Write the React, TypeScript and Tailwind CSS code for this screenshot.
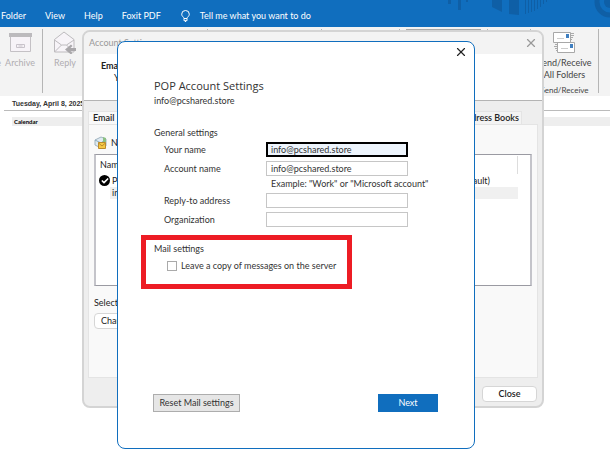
import { Check, X } from 'lucide-react'

const menu = ['Folder', 'View', 'Help', 'Foxit PDF']

const fields = [
  { id: 'your-name', label: 'Your name', value: 'info@pcshared.store', active: true },
  { id: 'account-name', label: 'Account name', value: 'info@pcshared.store', hint: 'Example: "Work" or "Microsoft account"' },
  { id: 'reply-to', label: 'Reply-to address', value: '' },
  { id: 'organization', label: 'Organization', value: '' },
]

function MenuBar() {
  return (
    <header className="relative flex h-[27px] items-center overflow-hidden bg-[#106ebe] pt-1 text-[9px] text-white">
      <svg className="absolute top-0 right-0" width="170" height="27" viewBox="0 0 170 27" fill="#0f5fa6">
        <path d="M8 0h3v4H8zM18 0h3v10h-3zM26 0h2v2h-2z" />
        <path d="M52 0h10v12l-10-5zM69 0h10v15l-10-1z" />
        <path d="M85 0h1v14h-1zM88 0h1v13h-1zM91 0h1v12h-1zM94 0h1v11h-1zM97 0h1v9h-1zM100 0h1v7h-1zM103 0h1v4h-1zM106 0h1v2h-1z" />
        <circle cx="170" cy="2" r="13" fill="none" stroke="#0f5fa6" strokeWidth="5" />
        <circle cx="170" cy="2" r="6" />
      </svg>
      <nav className="flex gap-[19px] pl-px">
        {menu.map((item) => (
          <a key={item} href="#" className="whitespace-nowrap">
            {item}
          </a>
        ))}
      </nav>
      <button className="ml-5 flex items-center gap-[10px] whitespace-nowrap">
        <svg width="9" height="12" viewBox="0 0 9 12" fill="none" stroke="white" strokeWidth="1">
          <path d="M3 8.5C3 7 .7 6.500 .7 4.200a3.800 3.700 0 0 1 7.600 0C8.300 6.500 6 7 6 8.500zM3 8.500v2.200h3V8.500M4 11.500h1" />
        </svg>
        Tell me what you want to do
      </button>
    </header>
  )
}

function ArchiveIcon() {
  return (
    <svg width="23" height="21" viewBox="0 0 23 21" fill="none">
      <path d="M1.500 4v15.500h20V4" fill="#f7f3f8" stroke="#c4c1c5" />
      <path d="M0 1h23v4H0z" fill="#bcbabd" />
      <path d="M7.500 12.500h8v3h-8zM9.500 14h4" stroke="#c9c3cb" />
    </svg>
  )
}

function ReplyIcon() {
  return (
    <svg width="24" height="23" viewBox="0 0 24 23" fill="none">
      <path d="M1.500 8.500L11 1l10 7.500v12.500H1.500z" fill="#f7f4f8" stroke="#bdbbbe" />
      <path d="M1.500 9l7 5h5l7.500-5M1.500 21l7-7M13.500 14l2 2" stroke="#bdbbbe" />
      <path d="M12 18.500l6-5 1.500 1.500-2 2H23v3h-5.500l2 2-1.500 1.500z" fill="#a9a7aa" />
    </svg>
  )
}

function SendReceiveIcon() {
  return (
    <svg width="22" height="23" viewBox="0 0 22 23" fill="none">
      <path d="M18 2.500h3M18 4.500h3M18 6.500h2M18 8.500h1M2 13.500h3M1 15.500h4M2 17.500h3M3 19.500h2" stroke="#aaa" />
      <path d="M.5 1.500h17v10H.5zM4.500 11.500h17v10h-17z" fill="#fff" stroke="#a8a8a8" />
      <path d="M4 7.500h7M8 17.500h7" stroke="#ccc" />
      <path d="M13 3h3v4h-3zM17 13h3v4h-3z" fill="#3f7fc0" />
    </svg>
  )
}

function Ribbon() {
  return (
    <div className="flex h-[69px] bg-[#f3f3f3] pt-[2px] text-[9px] text-[#b0adb1]">
      <div className="flex h-16 w-[43px] justify-end gap-1 overflow-hidden border-r border-[#b5b5b5] pr-[7px]">
        <span className="mt-7 shrink-0 leading-3">Delete</span>
        <button className="flex shrink-0 flex-col items-center pt-[3px]">
          <ArchiveIcon />
          <span className="mt-1 leading-3">Archive</span>
        </button>
      </div>
      <div className="h-16 w-[165px] border-r border-[#b5b5b5] pl-[10px]">
        <button className="flex flex-col items-center pt-[2px]">
          <ReplyIcon />
          <span className="mt-[3px] leading-3">Reply</span>
        </button>
      </div>
      <div className="h-16 flex-1 border-r border-[#b5b5b5]" />
      <div className="h-16 w-[78px] border-r border-[#b5b5b5]" />
      <div className="h-16 w-[88px] border-r border-[#b5b5b5] px-[6px]">
        <div className="h-3 border border-[#a8a8a8] bg-white" />
      </div>
      <div className="h-16 w-[43px] border-r border-[#b5b5b5]" />
      <div className="flex h-16 w-[68px] flex-col items-center border-r border-[#b5b5b5] text-[#444]">
        <button className="flex flex-col items-center pt-[2px] leading-3 whitespace-nowrap">
          <SendReceiveIcon />
          <span className="mt-[3px]">Send/Receive</span>
          <span>All Folders</span>
        </button>
        <span className="mt-[3px] text-[8px] leading-3">Send/Receive</span>
      </div>
      <div className="w-[11px]" />
    </div>
  )
}

function CalendarPane() {
  return (
    <main className="bg-white">
      <div className="ml-1 h-[15px] border-b border-[#bbb] pl-2 font-['Liberation_Sans'] text-[7px] leading-4 font-bold text-[#333]">
        Tuesday, April 8, 2025
      </div>
      <div className="mt-[6px] ml-3 h-[9px] bg-[#eee] pl-[2px] text-[6px] leading-[9px] font-bold text-black">Calendar</div>
    </main>
  )
}

function AccountSettings() {
  return (
    <section className="absolute top-[30px] right-[66px] left-[82px] rounded-lg border-2 border-[#d4d4d4] bg-[#eee] text-[9px] leading-3 text-[#222]">
      <div className="flex h-[22px] items-center justify-between rounded-t-md bg-[#f3f3f3] pr-1 pl-[5px] text-[#999]">
        Account Settings
        <button aria-label="Close account settings">
          <X size={14} strokeWidth={2} />
        </button>
      </div>
      <div className="h-[47px] border-b border-[#b4b4b4] bg-white pt-[6px] pl-[17px]">
        <h2 className="font-bold">Email Accounts</h2>
        <p className="pl-[13px]">You can</p>
      </div>
      <div className="px-1 pt-[10px]">
        <div className="flex justify-between pr-4">
          <button className="border-x border-t border-[#e4e4e4] bg-[#f9f9f9] px-1 font-semibold">Email</button>
          <button className="border-x border-t border-[#e4e4e4] bg-[#f3f3f3] px-[2px] font-semibold">Address Books</button>
        </div>
        <div className="h-[254px] border border-[#e4e4e4] bg-[#f9f9f9] px-[5px] pt-[11px]">
          <button className="flex items-center gap-1">
            <svg width="13" height="13" viewBox="0 0 13 13" fill="none">
              <path d="M1 4l6-3 5 2v7l-5 2-6-3z" fill="#dfeaf2" stroke="#9fb3bf" />
              <path d="M1 4l6 3 5-4" stroke="#86aabb" />
              <path d="M9 1l3 1v4H9z" fill="#8cc084" />
              <path d="M4.500 6.500h7v6h-7z" fill="#f6c945" stroke="#bb8b2d" />
              <path d="M4.500 7l3.500 3 3.500-3" stroke="#bb8b2d" />
            </svg>
            New...
          </button>
          <div className="mt-[5px] h-[132px] border-x-2 border-y border-x-[#c4c4ca] border-y-[#9a9aa2] bg-white pr-3">
            <div className="mt-px flex h-[18px] items-center border-r border-[#ddd] pl-1">Name</div>
            <div className="flex h-[13px] items-center justify-between pr-7 pl-[3px]">
              <span className="flex items-center gap-[2px]">
                <span className="flex size-[11px] items-center justify-center rounded-full bg-black text-white">
                  <Check size={8} strokeWidth={5} />
                </span>
                POP
              </span>
              <span>(default)</span>
            </div>
            <div className="ml-[14px] bg-[#f0f0f0] pl-[2px]">info@</div>
          </div>
          <p className="mt-[11px]">Selected account</p>
          <button className="mt-1 h-4 rounded-sm border border-[#d6d6d6] bg-white px-[6px]">Change Folder</button>
        </div>
      </div>
      <div className="flex justify-end px-[5px] pt-2 pb-1">
        <button className="h-4 w-[55px] rounded-sm border border-[#d6d6d6] bg-white leading-3 font-semibold">Close</button>
      </div>
    </section>
  )
}

function PopDialog() {
  return (
    <section className="absolute top-[41px] right-[135px] left-[117px] rounded-lg border border-[#106ebe] bg-white pb-9 text-[9px] leading-3 text-[#333]">
      <div className="flex h-9 items-start justify-end px-[6px] pt-[3px]">
        <button aria-label="Close dialog" className="text-[#222]">
          <X size={14} strokeWidth={2} />
        </button>
      </div>
      <div className="px-9">
        <h1 className="font-['Open_Sans'] text-[11px] leading-4 font-medium">POP Account Settings</h1>
        <p className="mt-px">info@pcshared.store</p>

        <h2 className="mt-5">General settings</h2>
        <div className="mt-[3px] flex flex-col gap-1 pl-[10px]">
          {fields.map((field) => (
            <div key={field.id} className="grid grid-cols-[102px_1fr]">
              <label htmlFor={field.id} className="leading-[15px]">
                {field.label}
              </label>
              <div>
                <input
                  id={field.id}
                  defaultValue={field.value}
                  className={
                    field.active
                      ? 'block h-[15px] w-[142px] border-2 border-black bg-[#eef5fd] px-[3px] leading-[11px]'
                      : 'block h-[15px] w-[142px] border border-[#c6c6c6] bg-white px-1 leading-[13px]'
                  }
                />
                {field.hint && <p className="mt-[2px] -mb-[1px] pl-[5px] whitespace-nowrap">{field.hint}</p>}
              </div>
            </div>
          ))}
        </div>
      </div>

      <div className="mt-2 ml-[23px] h-[54px] w-[211px] border-5 border-[#ed1c24] pt-[3px] pl-2">
        <h2>Mail settings</h2>
        <div className="mt-[5px] flex items-center gap-1 pl-[13px]">
          <input
            id="leave-copy"
            type="checkbox"
            className="size-[10px] shrink-0 appearance-none border border-[#aaa] bg-white checked:bg-[#106ebe]"
          />
          <label htmlFor="leave-copy" className="whitespace-nowrap">
            Leave a copy of messages on the server
          </label>
        </div>
      </div>

      <div className="mt-[105px] flex justify-between pr-9 pl-[35px]">
        <button className="h-[18px] w-[87px] border border-[#adadad] bg-[#e6e6e6] whitespace-nowrap">Reset Mail settings</button>
        <button className="h-[18px] w-[60px] bg-[#106ebe] text-white">Next</button>
      </div>
    </section>
  )
}

export default function App() {
  return (
    <div className="relative min-h-screen overflow-hidden bg-white font-['Lato','Open_Sans',sans-serif]">
      <MenuBar />
      <Ribbon />
      <CalendarPane />
      <AccountSettings />
      <PopDialog />
    </div>
  )
}
